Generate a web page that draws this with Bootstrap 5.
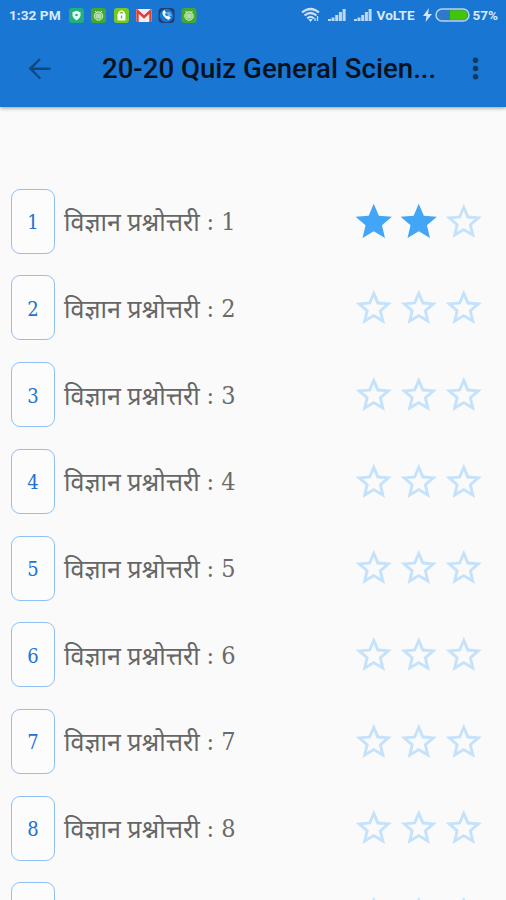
<!DOCTYPE html>
<html lang="hi">
<head>
<meta charset="utf-8">
<meta name="viewport" content="width=device-width, initial-scale=1">
<title>20-20 Quiz General Science</title>
<link rel="stylesheet" href="https://cdn.jsdelivr.net/npm/bootstrap@5.3.0/dist/css/bootstrap.min.css">
<style>
body{background:#fafafa;height:900px;overflow:hidden;font-family:Roboto,sans-serif}
.top-area{background:#1976d2;height:107px;box-shadow:0 1px 4px rgba(0,0,0,.4)}
.status{height:30px;padding:0 8px 0 9px;color:#d9e9fa;font-size:13.7px;font-weight:700;line-height:30px}
.status svg{display:block;flex:none}
.clock{width:59px;white-space:nowrap}
.network{font-size:13.5px;margin-left:5px}
.battery{font-size:13.5px}
.gap-signal{margin-left:8px}
.gap-tight{margin-left:3px}
.toolbar-row{height:77px;padding:0 14px 0 23px}
.toolbar-row svg{flex:none;fill:#124879}
.toolbar-row svg.menu-dots{fill:#0f3a62}
.app-title{width:340px;margin-left:46px;padding-top:1px;color:#06131f;font-size:27.6px;font-weight:500;line-height:36px;white-space:nowrap}
.quiz-list{height:793px;overflow:hidden;padding:81.8px 20.500px 0 11px}
.quiz-row{height:86.7px}
.num{width:44px;height:65px;border:1.3px solid #90c0f6;border-radius:9px;color:#2471d0;font:20px "DejaVu Serif Condensed","DejaVu Serif",serif;background:#fcfcfc;padding-top:2px}
.label-hi{margin-left:9px;color:#666;font-size:25px;line-height:36px;height:36px;white-space:nowrap;font-family:"Noto Sans","Noto Sans Devanagari",sans-serif}
.label-no{font:25px/36px "DejaVu Serif Condensed","DejaVu Serif",serif;color:#6b6b6b;margin-left:7px;padding-top:2px;white-space:nowrap}
.stars{gap:1.5px}
.stars svg{fill:#c5e2fb}
.stars svg.on{fill:#42a5f5}
</style>
<script src="https://cdn.jsdelivr.net/npm/bootstrap@5.3.0/dist/js/bootstrap.bundle.min.js"></script>
</head>
<body>
<header class="top-area position-relative">
  <div class="status d-flex align-items-center">
    <span class="clock">1:32 PM</span>
    <svg width="17" height="17" viewBox="0 0 17 17"><rect x="1" y="1" width="15" height="15" rx="3" fill="#20af7d"/><path d="M8.500 3.800l4 1.400v3.500q-.6 3-4 4.700-3.400-1.700-4-4.700V5.200z" fill="#e7fff4"/><circle cx="8.500" cy="8" r="1.300" fill="#20af7d"/></svg>
    <svg class="ms-1" width="19" height="17" viewBox="0 0 17 17"><rect x="1" y="1" width="15" height="15" rx="3" fill="#42a831"/><circle cx="8.500" cy="9" r="4.300" fill="#8ccb7d" stroke="#c5e8b9"/><path d="M5 4l2 2M12 4l-2 2M6 8h5M6 10h5" stroke="#d9f1cf" fill="none"/></svg>
    <svg class="ms-1" width="19" height="17" viewBox="0 0 17 17"><rect x="1" y="1" width="15" height="15" rx="3" fill="#73ca20"/><path d="M6 8V5.500q2.500-3 5 0V8" fill="none" stroke="#fff" stroke-width="1.400"/><rect x="4.500" y="6.500" width="8" height="7" rx="1" fill="#fff"/><path d="M8.500 8.500v3" stroke="#73ca20" stroke-width="1.500"/></svg>
    <svg class="ms-1" width="18" height="17" viewBox="0 0 18 17"><rect x="1" y="2" width="16" height="13" rx="1" fill="#f5eeee"/><path d="M2.500 15V4L9 10l6.500-6v11" fill="none" stroke="#d94138" stroke-width="2.400"/></svg>
    <svg class="ms-1" width="19" height="17" viewBox="0 0 18 17"><rect x="1" y="1" width="16" height="15" rx="4" fill="#243c6f"/><circle cx="9" cy="8.500" r="6.800" fill="#1279d5"/><path d="M5.500 4.500q-1 5 5.500 8l2-1.500-2-2-1.500.8Q7.500 8.500 7 7l1-1-1-2.500zM9 6h4M10 8h4" fill="#fff" stroke="#fff" stroke-width=".8"/></svg>
    <svg class="ms-1" width="18" height="17" viewBox="0 0 17 17"><rect x="1" y="1" width="15" height="15" rx="3" fill="#42a831"/><circle cx="8.500" cy="9" r="4.300" fill="#8ccb7d" stroke="#c5e8b9"/><path d="M5 4l2 2M12 4l-2 2M6 8h5M6 10h5" stroke="#d9f1cf" fill="none"/></svg>
    <svg class="ms-auto" width="20" height="16" viewBox="0 0 20 16" fill="none" stroke="#c9def5" stroke-width="2.200"><path d="M1 5.500q8.500-7 17 0M3.500 8.500q6-5 12 0M6.200 11.400q3.300-3 6.600 0"/><path d="M8 12.500l1.500 2 1.500-2z" fill="#c9def5" stroke-width="1"/><path d="M14 14v-3M16.500 14V9" stroke-width="1.300"/></svg>
    <svg class="gap-tight" style="margin-left:7px" width="18" height="14" viewBox="0 0 18 14" stroke="#bed7f3" stroke-width="3"><path d="M1.500 13v-2M5 13V9.500M8.700 13V7M12.400 13V4M16.100 13V1"/></svg>
    <svg class="gap-signal" width="18" height="14" viewBox="0 0 18 14" stroke="#bed7f3" stroke-width="3"><path d="M1.500 13v-2M5 13V9.500M8.700 13V7M12.400 13V4M16.100 13V1"/></svg>
    <span class="network">VoLTE</span>
    <svg class="gap-signal" width="9" height="14" viewBox="0 0 9 14"><path d="M6 0L0 8h3.500L2.500 14 9 6H5z" fill="#d5e6fa"/></svg>
    <svg class="gap-tight" width="35" height="14" viewBox="0 0 35 14"><rect x="1" y="1" width="33" height="12" rx="6" fill="#2d7acb" stroke="#b9d4ef" stroke-width="1.500"/><path d="M15 2.300h13q4.500 0 4.500 4.700t-4.500 4.700H15z" fill="#43c506"/></svg>
    <span class="gap-tight battery">57%</span>
  </div>
  <div class="toolbar-row d-flex align-items-center">
    <svg width="33" height="33" viewBox="0 0 24 24"><path d="M20 11.200H7.500l5.400-5.500L11.900 4.500 4 12l8 7.800 1.100-1.100-5.500-5.700H20z"/></svg>
    <div class="app-title">20-20 Quiz General Scien...</div>
    <svg class="menu-dots ms-auto" width="33" height="33" viewBox="0 0 24 24"><path d="M12 8a2 2 0 100-4 2 2 0 000 4zm0 2a2 2 0 100 4 2 2 0 000-4zm0 6a2 2 0 100 4 2 2 0 000-4z"/></svg>
  </div>
</header>
<main class="quiz-list" id="quizList"></main>
<script>
const full = 'M12 17.270L18.180 21l-1.640-7.030L22 9.240l-7.190-.61L12 2 9.190 8.630 2 9.240l5.460 4.730L5.820 21z';
const outline = 'M22 9.240l-7.190-.62L12 2 9.190 8.630 2 9.240l5.460 4.730L5.820 21 12 17.270 18.180 21l-1.630-7.030L22 9.240zM12 15.400l-3.760 2.270 1-4.280-3.320-2.880 4.380-.38L12 6.100l1.710 4.040 4.380.38-3.320 2.880 1 4.280L12 15.400z';
const earned = {1: 2};
const visibleLabels = 8;
document.getElementById('quizList').innerHTML = Array.from({length: 9}, (_, i) => {
  const n = i + 1;
  const hasText = n <= visibleLabels;
  const stars = [1, 2, 3].map(s => {
    const on = s <= (earned[n] || 0);
    return `<svg class="${on ? 'on' : ''}" width="43.5" height="43.5" viewBox="0 0 24 24"><path d="${on ? full : outline}"/></svg>`;
  }).join('');
  return `<div class="quiz-row d-flex align-items-start"><div class="d-flex align-items-center w-100">
    <div class="num d-flex align-items-center justify-content-center">${hasText ? n : ''}</div>
    ${hasText ? `<span class="label-hi">विज्ञान प्रश्नोत्तरी</span><span class="label-no">: ${n}</span>` : ''}
    <div class="stars d-flex ms-auto">${stars}</div></div></div>`;
}).join('');
</script>
</body>
</html>
